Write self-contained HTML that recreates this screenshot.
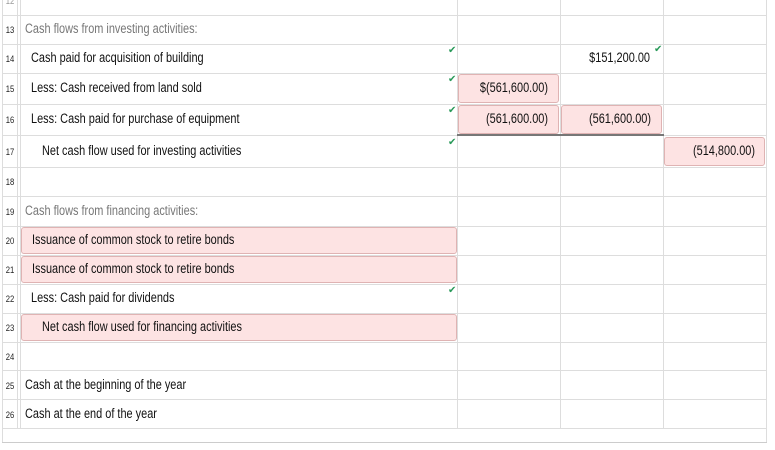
<!DOCTYPE html>
<html><head><style>
*{margin:0;padding:0;box-sizing:border-box}
body{width:775px;height:450px;background:#fff;position:relative;overflow:hidden;font-family:"Liberation Sans",sans-serif;font-size:13.5px;color:#111}
.h{position:absolute;left:2px;width:764px;height:1px;background:#ddd}
.v{position:absolute;top:0;width:1px;background:#ddd}
.n{position:absolute;left:3px;width:14px;font-size:9px;text-align:center;color:#222;transform:scaleX(0.85)}
.t{position:absolute;white-space:nowrap;transform:scaleX(0.81);transform-origin:left center}
.p{position:absolute;background:#fde3e3;border:1px solid #dfb3b3;border-radius:3px}
.ck{position:absolute;color:#2a9a5a;font-size:10px;font-family:"DejaVu Sans",sans-serif;font-weight:bold}
.r{text-align:right;transform-origin:right center}
</style></head><body>
<div class="v" style="left:2px;height:442px"></div>
<div class="v" style="left:17px;height:428px"></div>
<div class="v" style="left:20px;height:428px"></div>
<div class="v" style="left:457px;height:428px"></div>
<div class="v" style="left:560px;height:428px"></div>
<div class="v" style="left:663px;height:428px"></div>
<div class="v" style="left:766px;height:442px"></div>
<div class="h" style="top:15px"></div><div class="h" style="top:44px"></div><div class="h" style="top:73px"></div><div class="h" style="top:104px"></div><div class="h" style="top:135px"></div><div class="h" style="top:167px"></div><div class="h" style="top:196px"></div><div class="h" style="top:226px"></div><div class="h" style="top:255px"></div><div class="h" style="top:284px"></div><div class="h" style="top:313px"></div><div class="h" style="top:342px"></div><div class="h" style="top:370px"></div><div class="h" style="top:399px"></div><div class="h" style="top:428px"></div>
<div style="position:absolute;left:2px;top:442px;width:765px;height:1px;background:#ccc"></div>
<div style="position:absolute;left:457px;top:134px;width:207px;height:2px;background:#777"></div>

<div class="p" style="left:21px;top:227px;width:436px;height:27px"></div>
<div class="p" style="left:21px;top:256px;width:436px;height:27px"></div>
<div class="p" style="left:21px;top:314px;width:436px;height:27px"></div>
<div class="p" style="left:458px;top:74px;width:101px;height:29px"></div>
<div class="p" style="left:458px;top:105px;width:101px;height:29px"></div>
<div class="p" style="left:561px;top:105px;width:101px;height:29px"></div>
<div class="p" style="left:664px;top:137px;width:101px;height:29px"></div>

<div class="n" style="top:-4px;color:#999">12</div>
<div class="n" style="top:25px">13</div><div class="t" style="left:25px;top:21px;color:#777">Cash flows from investing activities:</div>
<div class="n" style="top:54px">14</div><div class="t" style="left:31px;top:50px">Cash paid for acquisition of building</div>
<div class="n" style="top:84px">15</div><div class="t" style="left:31px;top:80px">Less: Cash received from land sold</div>
<div class="n" style="top:115px">16</div><div class="t" style="left:31px;top:111px">Less: Cash paid for purchase of equipment</div>
<div class="n" style="top:147px">17</div><div class="t" style="left:42px;top:143px">Net cash flow used for investing activities</div>
<div class="n" style="top:177px">18</div>
<div class="n" style="top:207px">19</div><div class="t" style="left:25px;top:203px;color:#777">Cash flows from financing activities:</div>
<div class="n" style="top:236px">20</div><div class="t" style="left:32px;top:232px">Issuance of common stock to retire bonds</div>
<div class="n" style="top:265px">21</div><div class="t" style="left:32px;top:261px">Issuance of common stock to retire bonds</div>
<div class="n" style="top:294px">22</div><div class="t" style="left:31px;top:290px">Less: Cash paid for dividends</div>
<div class="n" style="top:323px">23</div><div class="t" style="left:42px;top:319px">Net cash flow used for financing activities</div>
<div class="n" style="top:352px">24</div>
<div class="n" style="top:381px">25</div><div class="t" style="left:25px;top:377px">Cash at the beginning of the year</div>
<div class="n" style="top:410px">26</div><div class="t" style="left:25px;top:406px">Cash at the end of the year</div>

<div class="t r" style="left:550px;width:100px;top:50px">$151,200.00</div>
<div class="t r" style="left:448px;width:100px;top:80px">$(561,600.00)</div>
<div class="t r" style="left:448px;width:100px;top:111px">(561,600.00)</div>
<div class="t r" style="left:551px;width:100px;top:111px">(561,600.00)</div>
<div class="t r" style="left:654px;width:101px;top:143px">(514,800.00)</div>

<div class="ck" style="left:448px;top:45px">✔</div>
<div class="ck" style="left:654px;top:44px">✔</div>
<div class="ck" style="left:448px;top:74px">✔</div>
<div class="ck" style="left:448px;top:105px">✔</div>
<div class="ck" style="left:448px;top:137px">✔</div>
<div class="ck" style="left:448px;top:285px">✔</div>
</body></html>
